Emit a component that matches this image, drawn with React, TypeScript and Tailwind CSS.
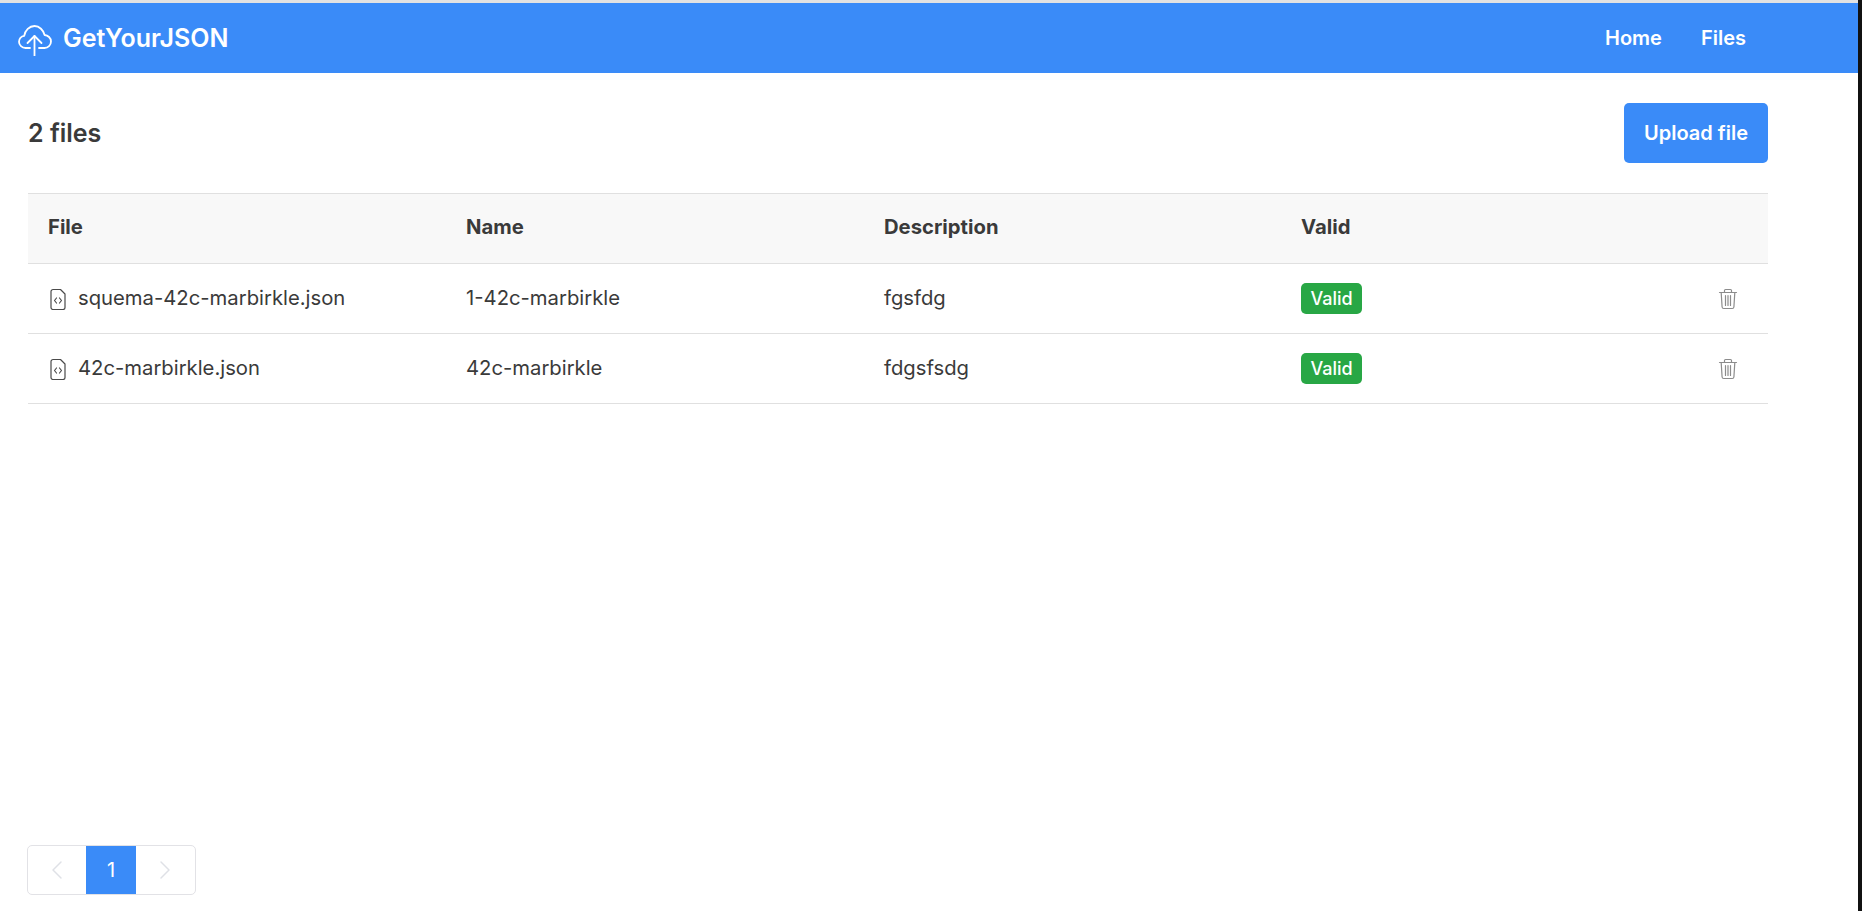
import { ChevronLeft, ChevronRight } from 'lucide-react';

const files = [
  { file: 'squema-42c-marbirkle.json', name: '1-42c-marbirkle', description: 'fgsfdg' },
  { file: '42c-marbirkle.json', name: '42c-marbirkle', description: 'fdgsfsdg' },
];

function CloudIcon() {
  return (
    <svg viewBox="0 0 36 36" className="w-[36px] h-[36px]" fill="none" stroke="white" strokeWidth="1.8" strokeLinecap="round" strokeLinejoin="round">
      <path d="M13 28H8.500C5 28 2 25.200 2 21.800c0-3 2.200-5.500 5.200-6C8 10.600 12.400 6 17.500 6c4.900 0 9 4.300 10.100 9 3.300.2 6.400 3 6.400 6.500 0 3.600-3 6.500-6.500 6.500H22" />
      <path d="M17.500 36V16" />
      <path d="M10.500 23l7-7 7 7" />
    </svg>
  );
}

function FileIcon() {
  return (
    <svg viewBox="0 0 22 22" className="w-[22px] h-[22px] shrink-0" fill="none" stroke="#4a4a4a" strokeWidth="1.200" strokeLinecap="round" strokeLinejoin="round">
      <path d="M5 1.500h7.500L17 6v13.500a2 2 0 0 1-2 2H5a2 2 0 0 1-2-2v-16a2 2 0 0 1 2-2z" />
      <path d="M8.500 10L6.500 12.500l2 2.500" />
      <path d="M11.500 10l2 2.500-2 2.500" />
    </svg>
  );
}

function TrashIcon() {
  return (
    <svg viewBox="0 0 20 22" className="w-[20px] h-[22px]" fill="none" stroke="#8c8c8c" strokeWidth="1.200" strokeLinecap="round" strokeLinejoin="round">
      <path d="M1.500 4.500h17" />
      <path d="M6.500 4.300V2.600c0-.6.400-1.100 1-1.100h5c.6 0 1 .500 1 1.100v1.700" />
      <path d="M3.200 4.700l.9 14.300c.1.900.8 1.500 1.600 1.500h8.600c.8 0 1.500-.600 1.600-1.500l.9-14.300" />
      <path d="M7.500 7.500v10M10 7.500v10M12.500 7.500v10" />
    </svg>
  );
}

export default function App() {
  return (
    <div className="flex h-[911px] overflow-hidden bg-white font-['Inter',sans-serif] text-[#3a3a3a]">
      <div className="flex-1 flex flex-col min-w-0">
        <div className="h-[3px] bg-[#e2e2e2]" />
        <header className="h-[70px] bg-[#3a8bf8] text-white flex items-center justify-between pl-[17px] pr-[112px]">
          <div className="flex items-center gap-[10px]">
            <CloudIcon />
            <span className="text-[25px] font-semibold pt-[1px]">GetYourJSON</span>
          </div>
          <nav className="flex items-center gap-[39px] text-[20px] font-semibold">
            <a>Home</a>
            <a>Files</a>
          </nav>
        </header>

        <main className="flex-1 flex flex-col pl-[28px] pr-[90px]">
          <div className="flex items-center justify-between pt-[30px] pb-[30px]">
            <h1 className="text-[25px] font-semibold pt-[2px]">2 files</h1>
            <button className="h-[60px] w-[144px] rounded-[5px] bg-[#3a8bf8] text-white text-[20px] font-semibold">
              Upload file
            </button>
          </div>

          <table className="w-full table-fixed border-t border-[#e0e0e0] text-[20.25px]">
            <thead>
              <tr className="h-[70px] bg-[#f8f8f8] border-b border-[#e0e0e0] text-left">
                <th className="w-[418px] pl-[20px] pb-[2px] font-bold">File</th>
                <th className="w-[418px] pl-[20px] pb-[2px] font-bold">Name</th>
                <th className="w-[417px] pl-[20px] pb-[2px] font-bold">Description</th>
                <th className="pl-[20px] pb-[2px] font-bold">Valid</th>
                <th className="w-[100px]" />
              </tr>
            </thead>
            <tbody>
              {files.map((f) => (
                <tr key={f.file} className="h-[70px] border-b border-[#e0e0e0]">
                  <td className="pl-[20px]">
                    <div className="flex items-center gap-[8px]">
                      <FileIcon />
                      <span>{f.file}</span>
                    </div>
                  </td>
                  <td className="pl-[20px]">{f.name}</td>
                  <td className="pl-[20px]">{f.description}</td>
                  <td className="pl-[20px]">
                    <span className="inline-flex items-center h-[31px] px-[9.5px] rounded-[5px] bg-[#28a745] text-white text-[18px] font-medium">
                      Valid
                    </span>
                  </td>
                  <td>
                    <div className="flex justify-end pr-[30px]">
                      <TrashIcon />
                    </div>
                  </td>
                </tr>
              ))}
            </tbody>
          </table>

          <div className="mt-auto mb-[16px] ml-[-1px] flex w-fit h-[50px] rounded-[5px] border border-[#e2e2e6] overflow-hidden">
            <div className="w-[58px] flex items-center justify-center">
              <ChevronLeft className="w-[32px] h-[32px] text-[#dfe1e6]" strokeWidth={1.100} />
            </div>
            <div className="w-[50px] flex items-center justify-center bg-[#3a8bf8] text-white text-[20px]">1</div>
            <div className="w-[59px] flex items-center justify-center pr-[2px]">
              <ChevronRight className="w-[32px] h-[32px] text-[#dfe1e6]" strokeWidth={1.100} />
            </div>
          </div>
        </main>
      </div>
      <div className="w-[4px] bg-[#111111]" />
    </div>
  );
}
